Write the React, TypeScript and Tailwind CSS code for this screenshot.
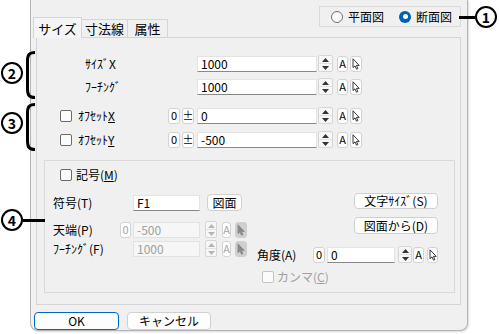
const Tri = ({ down, c = "#333" }: { down?: boolean; c?: string }) => (
  <svg width="7" height="4" viewBox="0 0 7 4">
    <path d={down ? "M0 0h7L3.5 4z" : "M3.5 0L7 4H0z"} fill={c} />
  </svg>
);

function Spin({ w = "w-[15px]", off }: { w?: string; off?: boolean }) {
  const c = off ? "#b5b5b5" : "#333";
  return (
    <div className={`${w} h-[17px] flex flex-col border border-[#d6d6d6] rounded-[2px] bg-[#f7f7f7]`}>
      <div className="flex-1 flex items-center justify-center border-b border-[#e2e2e2]">
        <Tri c={c} />
      </div>
      <div className="flex-1 flex items-center justify-center">
        <Tri down c={c} />
      </div>
    </div>
  );
}

function ABtn({ w = "w-[11px]", off }: { w?: string; off?: boolean }) {
  return (
    <div
      className={`${w} h-[16px] rounded-[3px] border border-[#d3d3d3] bg-white flex items-center justify-center text-[11px] leading-none ${
        off ? "text-[#a6a6a6]" : "text-black"
      }`}
    >
      A
    </div>
  );
}

function Pick({ w = "w-[12px]", off }: { w?: string; off?: boolean }) {
  return (
    <div
      className={`${w} h-[16px] rounded-[3px] border flex items-center justify-center ${
        off ? "bg-[#cfcfcf] border-[#cfcfcf]" : "bg-white border-[#d3d3d3]"
      }`}
    >
      <svg width="8" height="12" viewBox="0 0 8 12">
        <path
          d="M1 0.8V9.6L3 7.9L4.5 11.2L5.9 10.6L4.4 7.4H7.2Z"
          fill={off ? "#8a8a8a" : "#fff"}
          stroke={off ? "#8a8a8a" : "#222"}
          strokeWidth="0.9"
          strokeLinejoin="round"
        />
      </svg>
    </div>
  );
}

function Box({ t, w = "w-[12px]", off }: { t: string; w?: string; off?: boolean }) {
  return (
    <div
      className={`${w} h-[16px] rounded-[3px] border border-[#d3d3d3] bg-white flex items-center justify-center text-[11px] leading-none ${
        off ? "text-[#a6a6a6]" : "text-black"
      }`}
    >
      {t}
    </div>
  );
}

function Field({ v, w, off }: { v: string; w: string; off?: boolean }) {
  return (
    <div
      className={`${w} h-[16px] border flex items-center px-[3px] text-[12px] leading-none ${
        off
          ? "bg-[#f6f6f6] border-[#e2e2e2] text-[#a0a0a0]"
          : "bg-white border-[#e4e4e4] border-b-[#888] text-black"
      }`}
    >
      {v}
    </div>
  );
}

function Check({ off }: { off?: boolean }) {
  return (
    <div
      className={`w-[12px] h-[12px] rounded-[2px] border bg-[#fbfbfb] shrink-0 ${
        off ? "border-[#c4c4c4]" : "border-[#6a6a6a]"
      }`}
    />
  );
}

function Btn({ children, w, h = "h-[16px]" }: { children: React.ReactNode; w: string; h?: string }) {
  return (
    <div
      className={`${w} ${h} rounded-[4px] border border-[#d0d0d0] bg-[#fdfdfd] flex items-center justify-center text-[12px] leading-none text-black`}
    >
      {children}
    </div>
  );
}

function Num({ n, cls }: { n: string; cls: string }) {
  return (
    <div
      className={`absolute ${cls} w-[22px] h-[22px] rounded-full border-2 border-black bg-white flex items-center justify-center text-[14px] font-bold leading-none text-black`}
    >
      {n}
    </div>
  );
}

function Bracket({ cls }: { cls: string }) {
  return (
    <svg className={`absolute ${cls}`} width="12" height="48" viewBox="0 0 12 48">
      <path
        d="M11 1.5C5 1.5 3.5 4 3.5 10V38C3.5 44 5 46.5 11 46.5"
        stroke="#000"
        strokeWidth="3"
        fill="none"
      />
    </svg>
  );
}

export default function App() {
  return (
    <div className="w-[499px] h-[334px] bg-white relative overflow-hidden flex pl-[30px] font-['Noto_Sans_CJK_JP','Noto_Sans',sans-serif] text-[12px] text-black">
      <div className="w-[438px] h-[331px] bg-[#f0f0f0] border-x border-b border-[#b4b4b4] rounded-b-[8px] flex flex-col pl-[5px] pr-[6px] shadow-[1px_1px_2px_rgba(0,0,0,0.15)]">
        {/* header: tabs + view radio */}
        <div className="h-[37px] flex items-start justify-between">
          <div className="self-end mb-[-1px] ml-[-3px] relative z-10 flex items-end">
            <div className="w-[49px] h-[21px] bg-[#f5f5f5] border-x border-t border-[#d5d5d5] flex items-center justify-center text-[13px] leading-none">
              サイズ
            </div>
            <div className="w-[46px] h-[19px] bg-[#f0f0f0] border-t border-r border-b border-[#d5d5d5] flex items-center justify-center text-[13px] leading-none">
              寸法線
            </div>
            <div className="w-[40px] h-[19px] bg-[#f0f0f0] border-t border-r border-b border-[#d5d5d5] flex items-center justify-center text-[13px] leading-none">
              属性
            </div>
          </div>
          <div className="mt-[6px] w-[142px] h-[21px] border border-[#dadada] flex items-center pl-[11px]">
            <div className="w-[12px] h-[12px] rounded-full border border-[#6e6e6e] bg-[#fbfbfb]" />
            <span className="ml-[5px] leading-none">平面図</span>
            <div className="ml-[15px] w-[12px] h-[12px] rounded-full bg-[#005fb8] flex items-center justify-center">
              <div className="w-[5px] h-[5px] rounded-full bg-white" />
            </div>
            <span className="ml-[5px] leading-none">断面図</span>
          </div>
        </div>

        {/* tab page */}
        <div className="h-[268px] border border-[#d5d5d5] flex flex-col pt-[17px]">
          <div className="flex items-center h-[17px]">
            <div className="w-[160px] pl-[48px] leading-none">ｻｲｽﾞX</div>
            <Field v="1000" w="w-[120px]" />
            <div className="ml-[1px]"><Spin /></div>
            <div className="ml-[4px]"><ABtn /></div>
            <div className="ml-[2px]"><Pick /></div>
          </div>
          <div className="flex items-center h-[17px] mt-[6px]">
            <div className="w-[160px] pl-[48px] leading-none">ﾌｰﾁﾝｸﾞ</div>
            <Field v="1000" w="w-[120px]" />
            <div className="ml-[1px]"><Spin /></div>
            <div className="ml-[4px]"><ABtn /></div>
            <div className="ml-[2px]"><Pick /></div>
          </div>

          <div className="flex items-center h-[17px] mt-[12px]">
            <div className="w-[131px] pl-[23px] flex items-center">
              <Check />
              <span className="ml-[6px] leading-none">
                ｵﾌｾｯﾄ<span className="underline">X</span>
              </span>
            </div>
            <Box t="0" />
            <div className="ml-[2px]"><Box t="±" /></div>
            <div className="ml-[3px]"><Field v="0" w="w-[120px]" /></div>
            <div className="ml-[1px]"><Spin /></div>
            <div className="ml-[4px]"><ABtn /></div>
            <div className="ml-[2px]"><Pick /></div>
          </div>
          <div className="flex items-center h-[17px] mt-[7px]">
            <div className="w-[131px] pl-[23px] flex items-center">
              <Check />
              <span className="ml-[6px] leading-none">
                ｵﾌｾｯﾄ<span className="underline">Y</span>
              </span>
            </div>
            <Box t="0" />
            <div className="ml-[2px]"><Box t="±" /></div>
            <div className="ml-[3px]"><Field v="-500" w="w-[120px]" /></div>
            <div className="ml-[1px]"><Spin /></div>
            <div className="ml-[4px]"><ABtn /></div>
            <div className="ml-[2px]"><Pick /></div>
          </div>

          {/* symbol group */}
          <div className="ml-[7px] mt-[12px] w-[411px] h-[133px] border border-[#d9d9d9] flex">
            <div className="w-[212px] flex flex-col">
              <div className="mt-[5px] h-[17px] pl-[15px] flex items-center">
                <Check />
                <span className="ml-[4px] leading-none">
                  記号(<span className="underline">M</span>)
                </span>
              </div>
              <div className="mt-[11px] h-[17px] flex items-center">
                <div className="w-[88px] pl-[8px] leading-none">符号(T)</div>
                <Field v="F1" w="w-[67px]" />
                <div className="ml-[7px]">
                  <Btn w="w-[35px]" h="h-[17px]">図面</Btn>
                </div>
              </div>
              <div className="mt-[10px] h-[17px] flex items-center">
                <div className="w-[75px] pl-[8px] leading-none">天端(P)</div>
                <Box t="0" w="w-[11px]" off />
                <div className="ml-[2px]"><Field v="-500" w="w-[67px]" off /></div>
                <div className="ml-[5px]"><Spin w="w-[12px]" off /></div>
                <div className="ml-[5px]"><ABtn w="w-[9px]" off /></div>
                <div className="ml-[4px]"><Pick off /></div>
              </div>
              <div className="mt-[2px] h-[17px] flex items-center">
                <div className="w-[88px] pl-[8px] leading-none">ﾌｰﾁﾝｸﾞ(F)</div>
                <Field v="1000" w="w-[67px]" off />
                <div className="ml-[5px]"><Spin w="w-[12px]" off /></div>
                <div className="ml-[5px]"><ABtn w="w-[9px]" off /></div>
                <div className="ml-[4px]"><Pick off /></div>
              </div>
            </div>

            <div className="w-[181px] flex flex-col">
              <div className="mt-[32px] self-end">
                <Btn w="w-[84px]">文字ｻｲｽﾞ(S)</Btn>
              </div>
              <div className="mt-[8px] self-end">
                <Btn w="w-[84px]" h="h-[17px]">図面から(D)</Btn>
              </div>
              <div className="mt-[12px] h-[17px] flex items-center">
                <div className="w-[56px] leading-none">角度(A)</div>
                <Box t="0" />
                <div className="ml-[2px]"><Field v="0" w="w-[68px]" /></div>
                <div className="ml-[3px]"><Spin w="w-[14px]" /></div>
                <div className="ml-[1px]"><ABtn /></div>
                <div className="ml-[3px]"><Pick w="w-[11px]" /></div>
              </div>
              <div className="mt-[7px] h-[13px] pl-[5px] flex items-center">
                <Check off />
                <span className="ml-[3px] leading-none text-[#a0a0a0]">
                  カンマ(<span className="underline">C</span>)
                </span>
              </div>
            </div>
          </div>
        </div>

        {/* buttons */}
        <div className="mt-[7px] ml-[-2px] flex gap-[8px]">
          <div className="w-[85px] h-[18px] rounded-[4px] border-[1.5px] border-[#0067c0] bg-[#fdfdfd] flex items-center justify-center leading-none">
            OK
          </div>
          <Btn w="w-[84px]" h="h-[18px]">キャンセル</Btn>
        </div>
      </div>

      {/* annotations */}
      <div className="absolute left-[459px] top-[16px] w-[16px] h-[3px] bg-black" />
      <Num n="1" cls="left-[475px] top-[6px]" />
      <Num n="2" cls="left-[1px] top-[62px]" />
      <Bracket cls="left-[24px] top-[51px]" />
      <Num n="3" cls="left-[1px] top-[112px]" />
      <Bracket cls="left-[24px] top-[103px]" />
      <Num n="4" cls="left-[1px] top-[209px]" />
      <div className="absolute left-[23px] top-[219px] w-[22px] h-[3px] bg-black" />
    </div>
  );
}
